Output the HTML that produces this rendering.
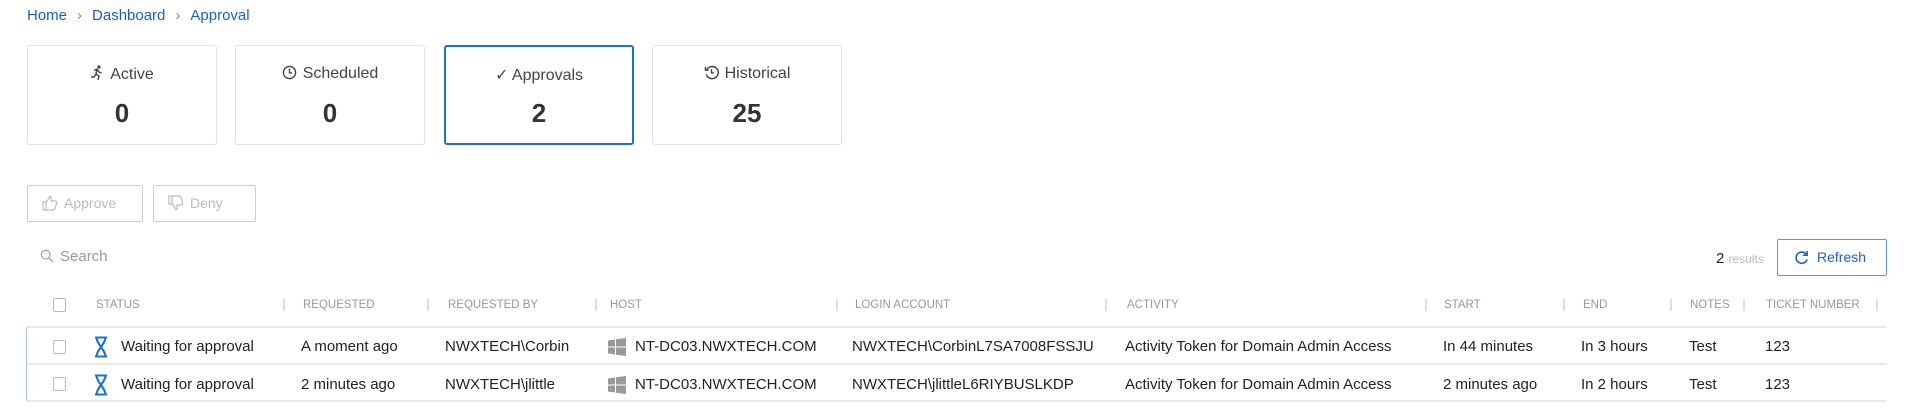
<!DOCTYPE html>
<html><head><meta charset="utf-8"><style>
*{box-sizing:border-box;margin:0;padding:0}
body{width:1912px;height:418px;background:#fff;font-family:"Liberation Sans",sans-serif;color:#222;position:relative;overflow:hidden}
.a{position:absolute;white-space:nowrap}
.bc{top:7px;left:27px;font-size:15px;color:#1a5fc8}
.bc span{color:#888;margin:0 10px}
.card{position:absolute;top:45px;width:190px;height:100px;border:1px solid #e3e3e3;border-radius:3px;text-align:center}
.card.sel{border:2px solid #1a6fd8}
.card .t{position:absolute;top:19px;left:0;right:0;font-size:16px;color:#444}
.card .n{position:absolute;top:52px;left:0;right:0;font-size:26px;color:#333;font-weight:bold}
.btn{position:absolute;top:185px;height:37px;border:1px solid #ccc;border-radius:2px;color:#bbb;font-size:14px;line-height:35px;padding-left:14px}
.hd{top:299px;font-size:11.5px;color:#999;text-transform:uppercase}
.sep{position:absolute;top:299px;width:2px;height:12px;border-left:1px solid #ddd;border-right:1px solid #ddd}
.r{font-size:15px;color:#222}
.line{position:absolute;left:27px;width:1860px;height:2px;background:#e8e8e8}
.cb{position:absolute;left:53px;width:13px;height:14px;border:1px solid #bbb;border-radius:2px}
</style></head><body>
<div class="a bc">Home<span>›</span>Dashboard<span>›</span>Approval</div>

<div class="card" style="left:27px"><div class="t"><svg width="14" height="16" viewBox="0 0 14 16" style="vertical-align:-2px;margin-right:6px"><circle cx="9" cy="2" r="1.6" fill="#444"/><path d="M4 5.5l3-1.5 2 3 2.5 1M7 4l-1 5 3 2-1 4M6 9l-2 3H1" fill="none" stroke="#444" stroke-width="1.4"/></svg>Active</div><div class="n">0</div></div>
<div class="card" style="left:235px"><div class="t"><svg width="15" height="15" viewBox="0 0 16 16" style="vertical-align:-2px;margin-right:6px"><circle cx="8" cy="8" r="6.5" fill="none" stroke="#444" stroke-width="1.5"/><path d="M8 4v4.5h2.5" fill="none" stroke="#444" stroke-width="1.5"/></svg>Scheduled</div><div class="n">0</div></div>
<div class="card sel" style="left:444px"><div class="t" style="top:18px">✓ Approvals</div><div class="n" style="top:51px">2</div></div>
<div class="card" style="left:652px"><div class="t"><svg width="15" height="15" viewBox="0 0 16 16" style="vertical-align:-2px;margin-right:6px"><path d="M3 5A6.5 6.5 0 1 1 2.5 10" fill="none" stroke="#444" stroke-width="1.5"/><path d="M1.5 2v3.5H5" fill="none" stroke="#444" stroke-width="1.5"/><path d="M8 4.5v4h2.5" fill="none" stroke="#444" stroke-width="1.5"/></svg>Historical</div><div class="n">25</div></div>

<div class="btn" style="left:27px;width:116px"><svg width="16" height="16" viewBox="0 0 16 16" style="vertical-align:-3px;margin-right:6px"><path d="M1 7h3v8H1zM4 8l3-5c0-2 2-2 2 0v3h4.5c1 0 1.5 1 1.2 2l-1.5 5c-.3 1-1 2-2 2H4" fill="none" stroke="#bbb" stroke-width="1.2"/></svg>Approve</div>
<div class="btn" style="left:153px;width:103px"><svg width="16" height="16" viewBox="0 0 16 16" style="vertical-align:-3px;margin-right:6px"><path d="M1 1h3v8H1zM4 8l3 5c0 2 2 2 2 0v-3h4.5c1 0 1.5-1 1.2-2l-1.5-5c-.3-1-1-2-2-2H4" fill="none" stroke="#bbb" stroke-width="1.2"/></svg>Deny</div>

<div class="a" style="top:248px;left:40px;font-size:15px;color:#999"><svg width="14" height="14" viewBox="0 0 16 16" style="vertical-align:-2px;margin-right:6px"><circle cx="6.5" cy="6.5" r="5" fill="none" stroke="#999" stroke-width="1.3"/><path d="M10 10l5 5" stroke="#999" stroke-width="1.3"/></svg>Search</div>
<div class="a" style="top:250px;left:1716px;font-size:15px">2 <span style="font-size:12px;color:#bbb">results</span></div>
<div class="a" style="top:239px;left:1777px;width:110px;height:37px;border:1px solid #5b95e0;border-radius:2px;color:#1a5fc8;font-size:14px;line-height:35px;padding-left:16px"><svg width="15" height="15" viewBox="0 0 16 16" style="vertical-align:-3px;margin-right:8px"><path d="M13 4.5A6 6 0 1 0 14 10" fill="none" stroke="#1a5fc8" stroke-width="1.7"/><path d="M14 1v4.5H9.5" fill="none" stroke="#1a5fc8" stroke-width="1.7"/></svg>Refresh</div>

<div class="cb" style="top:298px"></div>
<div class="a hd" style="left:96px">Status</div>
<div class="a hd" style="left:303px">Requested</div>
<div class="a hd" style="left:448px">Requested by</div>
<div class="a hd" style="left:610px">Host</div>
<div class="a hd" style="left:855px">Login account</div>
<div class="a hd" style="left:1127px">Activity</div>
<div class="a hd" style="left:1444px">Start</div>
<div class="a hd" style="left:1583px">End</div>
<div class="a hd" style="left:1690px">Notes</div>
<div class="a hd" style="left:1766px">Ticket number</div>
<div class="sep" style="left:283px"></div><div class="sep" style="left:427px"></div><div class="sep" style="left:595px"></div><div class="sep" style="left:836px"></div><div class="sep" style="left:1105px"></div><div class="sep" style="left:1425px"></div><div class="sep" style="left:1563px"></div><div class="sep" style="left:1670px"></div><div class="sep" style="left:1743px"></div><div class="sep" style="left:1876px"></div>

<div class="line" style="top:326px"></div>
<div class="line" style="top:363px"></div>
<div class="line" style="top:400px"></div>
<div class="a" style="left:26px;top:327px;width:1px;height:74px;background:#a8c4ea"></div>

<div class="cb" style="top:340px"></div>
<div class="cb" style="top:377px"></div>

<svg class="a" style="left:94px;top:336px" width="14" height="22" viewBox="0 0 14 22"><path d="M1 1.5h12M1 20.5h12M2.5 1.5C2.5 8 11.5 14 11.5 20.5M11.5 1.5C11.5 8 2.5 14 2.5 20.5" fill="none" stroke="#1a6fd8" stroke-width="2"/></svg>
<svg class="a" style="left:94px;top:374px" width="14" height="22" viewBox="0 0 14 22"><path d="M1 1.5h12M1 20.5h12M2.5 1.5C2.5 8 11.5 14 11.5 20.5M11.5 1.5C11.5 8 2.5 14 2.5 20.5" fill="none" stroke="#1a6fd8" stroke-width="2"/></svg>
<svg class="a" style="left:608px;top:338px" width="18" height="18" viewBox="0 0 18 18"><path d="M0 2.5l7-1v7H0zM8 1.3l10-1.3v8.5H8zM0 9.5h7v7l-7-1zM8 9.5h10V18l-10-1.3z" fill="#999"/></svg>
<svg class="a" style="left:608px;top:376px" width="18" height="18" viewBox="0 0 18 18"><path d="M0 2.5l7-1v7H0zM8 1.3l10-1.3v8.5H8zM0 9.5h7v7l-7-1zM8 9.5h10V18l-10-1.3z" fill="#999"/></svg>

<div class="a r" style="top:338px;left:121px">Waiting for approval</div>
<div class="a r" style="top:338px;left:301px">A moment ago</div>
<div class="a r" style="top:338px;left:445px">NWXTECH\Corbin</div>
<div class="a r" style="top:338px;left:635px">NT-DC03.NWXTECH.COM</div>
<div class="a r" style="top:338px;left:852px">NWXTECH\CorbinL7SA7008FSSJU</div>
<div class="a r" style="top:338px;left:1125px">Activity Token for Domain Admin Access</div>
<div class="a r" style="top:338px;left:1443px">In 44 minutes</div>
<div class="a r" style="top:338px;left:1581px">In 3 hours</div>
<div class="a r" style="top:338px;left:1689px">Test</div>
<div class="a r" style="top:338px;left:1765px">123</div>

<div class="a r" style="top:376px;left:121px">Waiting for approval</div>
<div class="a r" style="top:376px;left:301px">2 minutes ago</div>
<div class="a r" style="top:376px;left:445px">NWXTECH\jlittle</div>
<div class="a r" style="top:376px;left:635px">NT-DC03.NWXTECH.COM</div>
<div class="a r" style="top:376px;left:852px">NWXTECH\jlittleL6RIYBUSLKDP</div>
<div class="a r" style="top:376px;left:1125px">Activity Token for Domain Admin Access</div>
<div class="a r" style="top:376px;left:1443px">2 minutes ago</div>
<div class="a r" style="top:376px;left:1581px">In 2 hours</div>
<div class="a r" style="top:376px;left:1689px">Test</div>
<div class="a r" style="top:376px;left:1765px">123</div>
</body></html>
